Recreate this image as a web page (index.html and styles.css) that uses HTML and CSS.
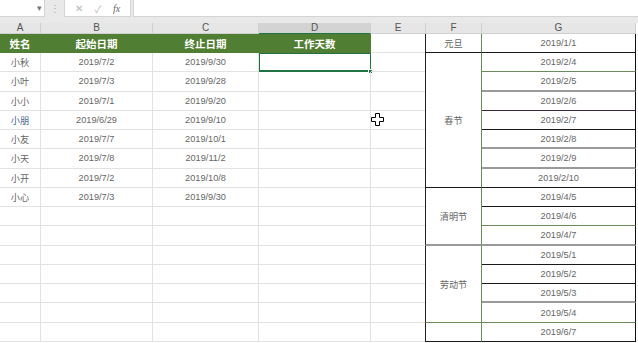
FILE: index.html
```html
<!DOCTYPE html>
<html lang="zh-CN">
<head>
    <meta charset="UTF-8">
    <title>工作天数</title>
    <link rel="stylesheet" href="styles.css">
</head>
<body>

    <div class="app">
        <div class="formula-bar">
            <div class="name-box"><span class="caret">▾</span></div>
            <div class="grip">⋮</div>
            <div class="fx-tools">
                <span>✕</span>
                <span>✓</span>
                <span class="fx">fx</span>
            </div>
            <div class="formula-input"></div>
        </div>

        <div class="sheet">
            <!-- column letters -->
            <div class="col-head">A</div>
            <div class="col-head">B</div>
            <div class="col-head">C</div>
            <div class="col-head active">D</div>
            <div class="col-head">E</div>
            <div class="col-head">F</div>
            <div class="col-head">G</div>

            <!-- header row -->
            <div class="cell head">姓名</div>
            <div class="cell head">起始日期</div>
            <div class="cell head">终止日期</div>
            <div class="cell head">工作天数</div>
            <div class="cell"></div>
            <div class="cell fest line-k">元旦</div>
            <div class="cell day line-k">2019/1/1</div>

            <div class="cell">小秋</div>
            <div class="cell">2019/7/2</div>
            <div class="cell">2019/9/30</div>
            <div class="cell selected"><span class="handle"></span></div>
            <div class="cell"></div>
            <div class="cell fest line-k" style="grid-row: span 7">春节</div>
            <div class="cell day line-v">2019/2/4</div>

            <div class="cell">小叶</div>
            <div class="cell">2019/7/3</div>
            <div class="cell">2019/9/28</div>
            <div class="cell"></div>
            <div class="cell"></div>
            <div class="cell day line-g">2019/2/5</div>

            <div class="cell">小小</div>
            <div class="cell">2019/7/1</div>
            <div class="cell">2019/9/20</div>
            <div class="cell"></div>
            <div class="cell"></div>
            <div class="cell day line-p">2019/2/6</div>

            <div class="cell name-blue">小朋</div>
            <div class="cell">2019/6/29</div>
            <div class="cell">2019/9/10</div>
            <div class="cell"></div>
            <div class="cell"></div>
            <div class="cell day line-k">2019/2/7</div>

            <div class="cell">小友</div>
            <div class="cell">2019/7/7</div>
            <div class="cell">2019/10/1</div>
            <div class="cell"></div>
            <div class="cell"></div>
            <div class="cell day line-g">2019/2/8</div>

            <div class="cell">小天</div>
            <div class="cell">2019/7/8</div>
            <div class="cell">2019/11/2</div>
            <div class="cell"></div>
            <div class="cell"></div>
            <div class="cell day line-g">2019/2/9</div>

            <div class="cell">小开</div>
            <div class="cell">2019/7/2</div>
            <div class="cell">2019/10/8</div>
            <div class="cell"></div>
            <div class="cell"></div>
            <div class="cell day line-k">2019/2/10</div>

            <div class="cell">小心</div>
            <div class="cell">2019/7/3</div>
            <div class="cell">2019/9/30</div>
            <div class="cell"></div>
            <div class="cell"></div>
            <div class="cell fest line-g" style="grid-row: span 3">清明节</div>
            <div class="cell day line-k">2019/4/5</div>

            <div class="cell"></div>
            <div class="cell"></div>
            <div class="cell"></div>
            <div class="cell"></div>
            <div class="cell"></div>
            <div class="cell day line-v">2019/4/6</div>

            <div class="cell"></div>
            <div class="cell"></div>
            <div class="cell"></div>
            <div class="cell"></div>
            <div class="cell"></div>
            <div class="cell day line-g">2019/4/7</div>

            <div class="cell"></div>
            <div class="cell"></div>
            <div class="cell"></div>
            <div class="cell"></div>
            <div class="cell"></div>
            <div class="cell fest line-v" style="grid-row: span 4">劳动节</div>
            <div class="cell day line-k">2019/5/1</div>

            <div class="cell"></div>
            <div class="cell"></div>
            <div class="cell"></div>
            <div class="cell"></div>
            <div class="cell"></div>
            <div class="cell day line-k">2019/5/2</div>

            <div class="cell"></div>
            <div class="cell"></div>
            <div class="cell"></div>
            <div class="cell"></div>
            <div class="cell"></div>
            <div class="cell day line-g">2019/5/3</div>

            <div class="cell"></div>
            <div class="cell"></div>
            <div class="cell"></div>
            <div class="cell"></div>
            <div class="cell"></div>
            <div class="cell day line-v">2019/5/4</div>

            <div class="cell"></div>
            <div class="cell"></div>
            <div class="cell"></div>
            <div class="cell"></div>
            <div class="cell"></div>
            <div class="cell fest line-k"></div>
            <div class="cell day line-k">2019/6/7</div>
        </div>

        <!-- mouse pointer -->
        <svg class="pointer" width="13" height="13" viewBox="0 0 13 13">
            <path d="M4.5 0.5h4v4h4v4h-4v4h-4v-4h-4v-4h4z" fill="#fff" stroke="#000" stroke-width="1"/>
        </svg>
    </div>

</body>
</html>
```

FILE: styles.css
```css
body {
    margin: 0;
    padding: 0;
    background: #fff;
    font-family: "Liberation Sans", "Noto Sans CJK SC", sans-serif;
    font-size: 10px;
    color: #5a5a5a;
}

.app {
    position: relative;
    width: 638px;
    height: 343px;
    overflow: hidden;
    background: #fff;
}

/* formula bar */
.formula-bar {
    display: flex;
    align-items: stretch;
    height: 23px;
    background: #e9e9e9;
    box-sizing: border-box;
    padding: 0 0 6px 0;
}

.name-box {
    width: 45px;
    background: #fff;
    border: 1px solid #d4d4d4;
    border-left: none;
    border-top: none;
    box-sizing: border-box;
    display: flex;
    justify-content: flex-end;
    align-items: center;
    padding-right: 2px;
}

.caret {
    font-size: 9px;
    color: #777;
}

.grip {
    width: 19px;
    display: flex;
    justify-content: center;
    align-items: center;
    color: #aaa;
    font-size: 10px;
}

.fx-tools {
    width: 67px;
    background: #fff;
    border: 1px solid #d4d4d4;
    border-top: none;
    box-sizing: border-box;
    display: flex;
    justify-content: space-around;
    align-items: center;
    padding: 0 4px;
    color: #b8b8b8;
    font-size: 10px;
}

.fx-tools .fx {
    font-family: "Liberation Serif", serif;
    font-style: italic;
    color: #666;
}

.formula-input {
    flex: 1;
    margin-left: 2px;
    background: #fff;
    border: 1px solid #d4d4d4;
    border-top: none;
    border-right: none;
}

/* sheet grid */
.sheet {
    display: grid;
    grid-template-columns: 41px 112px 106px 112px 55px 56px 154px;
    grid-template-rows: 11px 19px repeat(15, 19.27px);
}

.col-head {
    background: #e6e6e6;
    border-right: 1px solid #cfcfcf;
    border-bottom: 1px solid #cfcfcf;
    box-sizing: border-box;
    text-align: center;
    font-size: 10px;
    line-height: 10px;
    color: #555;
}

.col-head.active {
    background: #d3d3d3;
    border-bottom: 1px solid #217346;
}

.cell {
    border-right: 1px solid #e2e2e2;
    border-bottom: 1px solid #e2e2e2;
    box-sizing: border-box;
    display: flex;
    justify-content: center;
    align-items: center;
    font-size: 9.2px;
    color: #666;
    white-space: nowrap;
    position: relative;
}

.cell.head {
    background: #507e32;
    color: #fff;
    font-weight: bold;
    font-size: 10.5px;
    border-right-color: #507e32;
    border-bottom-color: #507e32;
}

.name-blue {
    color: #4a6c8c;
}

.cell.selected {
    border-bottom: 2px solid #217346;
    border-right: 1px solid #217346;
    box-shadow: inset 1px 0 0 #217346, inset 0 1px 0 #217346;
}

.handle {
    position: absolute;
    right: -3px;
    bottom: -4px;
    width: 5px;
    height: 5px;
    background: #217346;
    border: 1px solid #fff;
    box-sizing: border-box;
}

/* holiday table */
.cell.fest {
    z-index: 1;
    margin-left: -1px;
    border-left: 1px solid #2a1c2a;
    border-right: 1px solid #6d8a5c;
    color: #666;
}

.cell.day {
    border-right: 1px solid #111;
}

.line-k { border-bottom: 1px solid #1a1a1a; }
.line-g { border-bottom: 2px solid #9a9a9a; }
.line-v { border-bottom: 1px solid #6d8a5c; }
.line-p { border-bottom: 1px solid #3a2838; }

.pointer {
    position: absolute;
    left: 371px;
    top: 113px;
}
```
